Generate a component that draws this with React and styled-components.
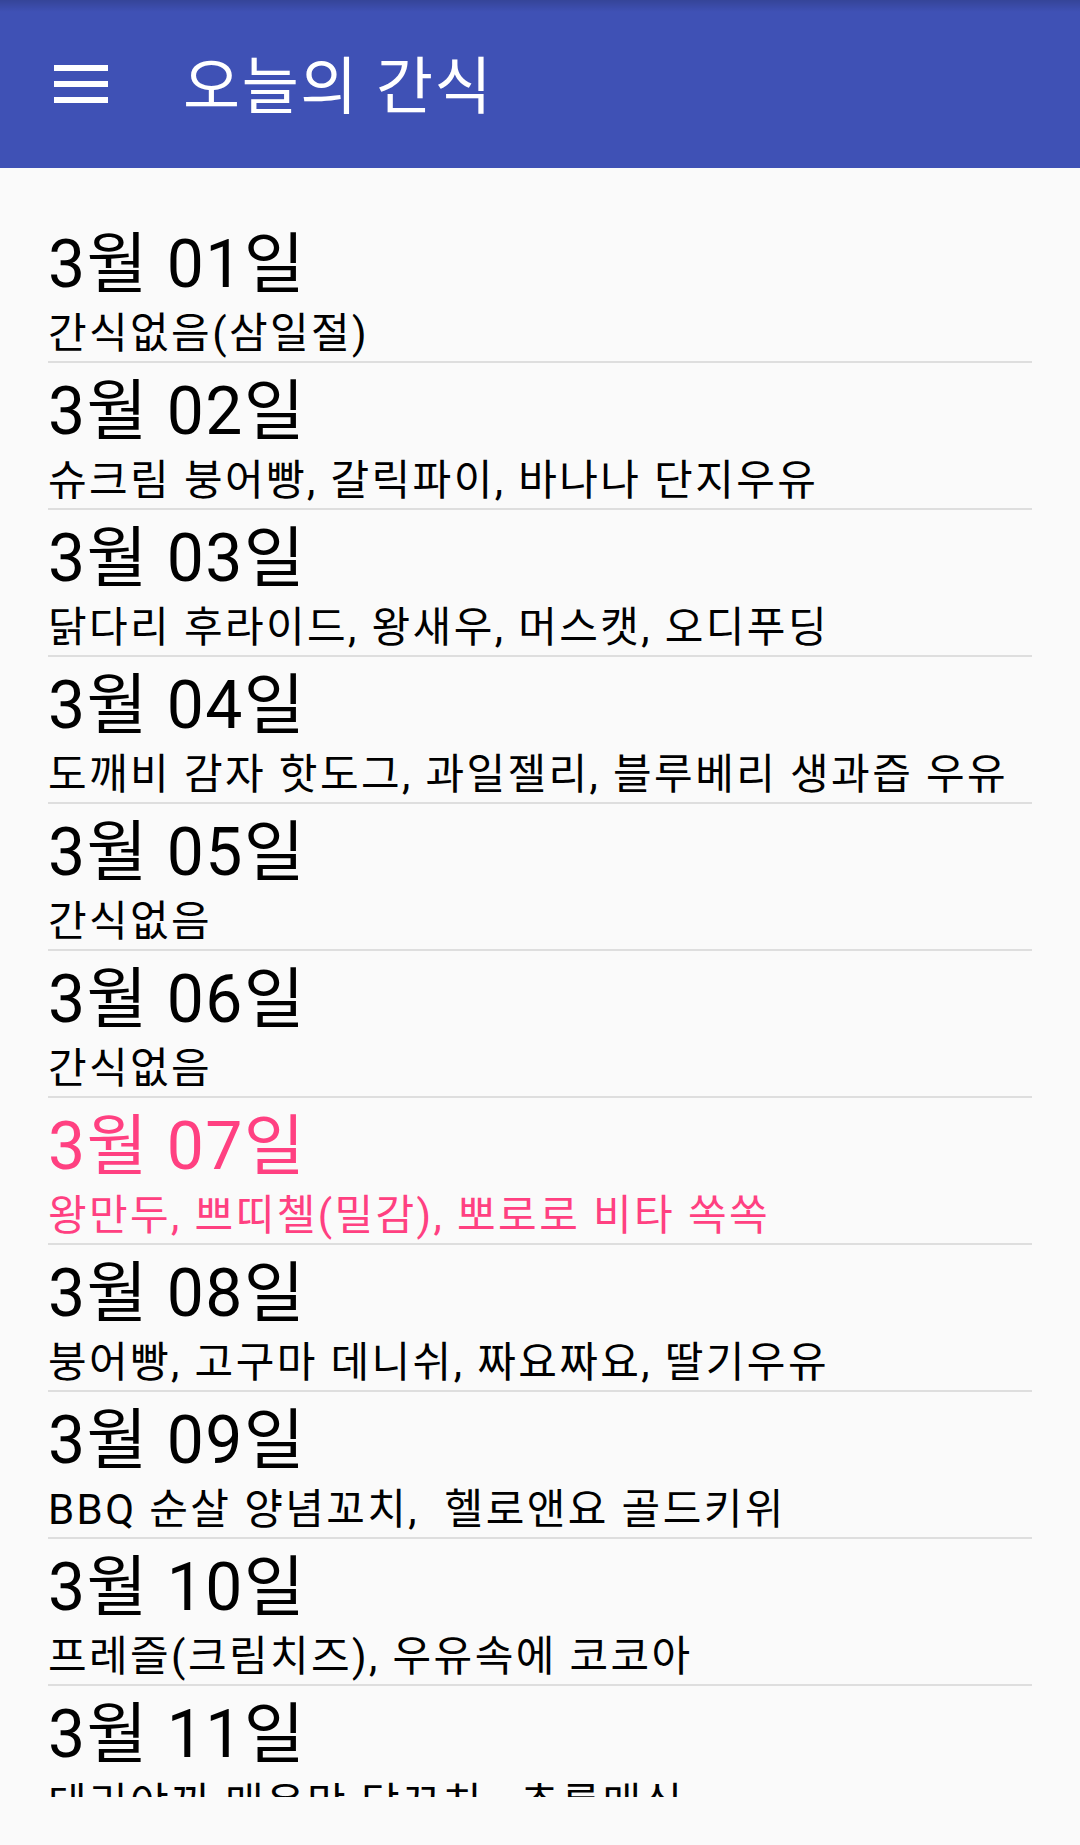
import React from 'react';
import styled, { createGlobalStyle } from 'styled-components';

const GlobalStyle = createGlobalStyle`
  html, body {
    margin: 0;
    padding: 0;
    background: #fafafa;
  }
  body {
    font-family: Roboto, "Noto Sans CJK KR", sans-serif;
  }
`;

// Layout
const Screen = styled.div`
  width: 1080px;
  height: 1845px;
  display: flex;
  flex-direction: column;
  background: #fafafa;
  overflow: hidden;
`;

const Toolbar = styled.header`
  height: 168px;
  flex-shrink: 0;
  display: flex;
  align-items: center;
  background: linear-gradient(to bottom, rgba(0, 0, 0, 0.16) 0px, rgba(0, 0, 0, 0) 12px), #3f51b5;
`;

const MenuButton = styled.div`
  width: 54px;
  margin-left: 54px;
  margin-right: 75px;
  display: flex;
  flex-direction: column;
  gap: 10px;
`;

const MenuBar = styled.span`
  display: block;
  height: 6px;
  background: #fff;
`;

const Title = styled.h1`
  margin: 0 0 4px;
  font-size: 62px;
  font-weight: 400;
  letter-spacing: 1.6px;
  color: #fff;
`;

const Content = styled.main`
  flex: 1;
  min-height: 0;
  padding: 48px;
  display: flex;
`;

const MenuList = styled.ul`
  flex: 1;
  list-style: none;
  margin: 0;
  padding: 0;
  overflow: hidden;
`;

const MenuItem = styled.li`
  padding: 10px 0 3px;
  border-bottom: 2px solid #dedede;
  color: ${props => (props.today ? '#ff4081' : '#000')};
`;

const DateText = styled.div`
  font-size: 66px;
  line-height: 77px;
  letter-spacing: 1.5px;
  margin-bottom: 6px;
`;

const SnackText = styled.div`
  font-size: 42px;
  line-height: 49px;
  letter-spacing: 2.4px;
  white-space: pre;
`;

const snacks = [
  { date: '3월 01일', menu: '간식없음(삼일절)' },
  { date: '3월 02일', menu: '슈크림 붕어빵, 갈릭파이, 바나나 단지우유' },
  { date: '3월 03일', menu: '닭다리 후라이드, 왕새우, 머스캣, 오디푸딩' },
  { date: '3월 04일', menu: '도깨비 감자 핫도그, 과일젤리, 블루베리 생과즙 우유' },
  { date: '3월 05일', menu: '간식없음' },
  { date: '3월 06일', menu: '간식없음' },
  { date: '3월 07일', menu: '왕만두, 쁘띠첼(밀감), 뽀로로 비타 쏙쏙', today: true },
  { date: '3월 08일', menu: '붕어빵, 고구마 데니쉬, 짜요짜요, 딸기우유' },
  { date: '3월 09일', menu: 'BBQ 순살 양념꼬치,  헬로앤요 골드키위' },
  { date: '3월 10일', menu: '프레즐(크림치즈), 우유속에 코코아' },
  { date: '3월 11일', menu: '데리야끼 매운맛 닭꼬치,  츄릅매실' },
];

const App = () => {
  return (
    <Screen>
      <GlobalStyle />
      <Toolbar>
        <MenuButton>
          <MenuBar />
          <MenuBar />
          <MenuBar />
        </MenuButton>
        <Title>오늘의 간식</Title>
      </Toolbar>

      <Content>
        <MenuList>
          {snacks.map((item) => (
            <MenuItem key={item.date} today={item.today}>
              <DateText>{item.date}</DateText>
              <SnackText>{item.menu}</SnackText>
            </MenuItem>
          ))}
        </MenuList>
      </Content>
    </Screen>
  );
};

export default App;
